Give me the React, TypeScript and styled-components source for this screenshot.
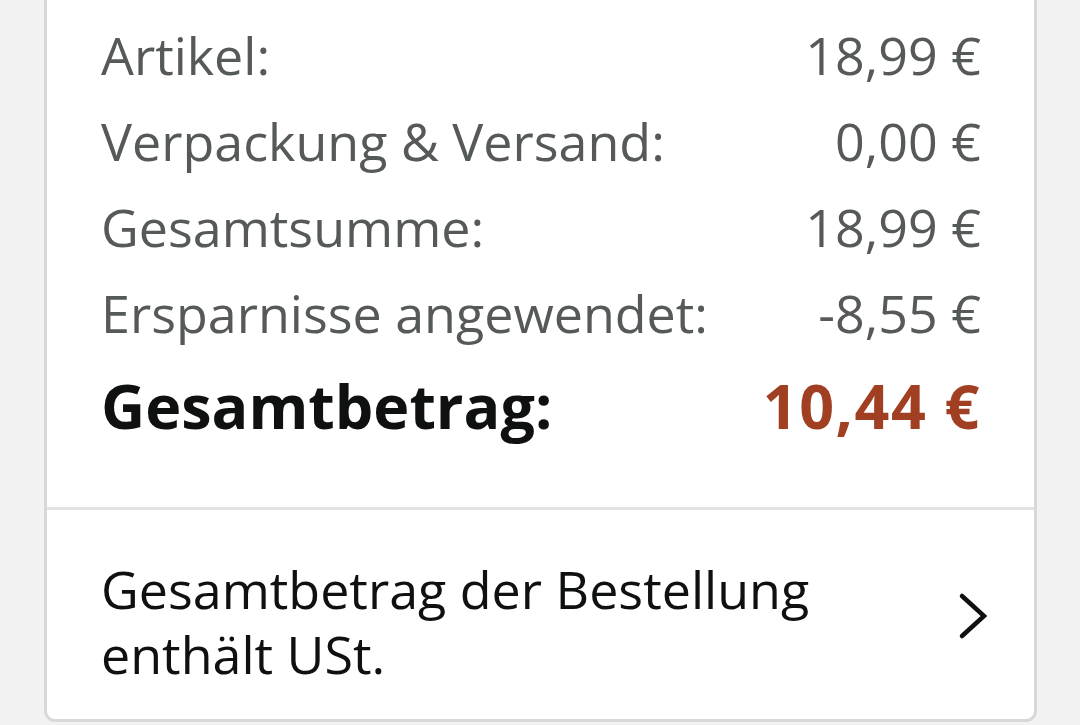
import React from "react";
import styled, { createGlobalStyle } from "styled-components";

const GlobalStyle = createGlobalStyle`
  html, body {
    margin: 0;
    padding: 0;
    background: #f2f2f2;
    font-family: "Open Sans", "Noto Sans", Arial, sans-serif;
    overflow: hidden;
  }
  * { box-sizing: border-box; }
`;

const Page = styled.div`
  width: 1080px;
  height: 725px;
  padding-left: 44px;
  background: #f2f2f2;
`;

const Card = styled.div`
  width: 993px;
  background: #ffffff;
  border: 3px solid #d8d8d8;
  border-top: none;
  border-radius: 0 0 11px 11px;
`;

const Summary = styled.div`
  display: flex;
  flex-direction: column;
  padding: 12px 53px 58px 54px;
`;

const Row = styled.div<{ $total?: boolean }>`
  display: flex;
  justify-content: space-between;
  align-items: baseline;
  font-size: ${(p) => (p.$total ? "61px" : "52px")};
  line-height: 86px;
  font-weight: ${(p) => (p.$total ? 700 : 400)};
  color: ${(p) => (p.$total ? "#0f1111" : "#565959")};
  margin-top: ${(p) => (p.$total ? "7px" : "0")};
`;

const Amount = styled.span<{ $total?: boolean }>`
  color: ${(p) => (p.$total ? "#a13f22" : "inherit")};
  letter-spacing: ${(p) => (p.$total ? "1.5px" : "0")};
`;

const Divider = styled.div`
  height: 3px;
  background: #e3e3e3;
`;

const TaxLink = styled.div`
  display: flex;
  align-items: flex-start;
  justify-content: space-between;
  padding: 46px 46px 33px 54px;
  gap: 40px;
`;

const TaxText = styled.div`
  flex: 1;
  font-size: 52px;
  line-height: 65px;
  color: #0f1111;
`;

const Chevron = styled.svg`
  flex: none;
  width: 30px;
  height: 48px;
  margin-top: 36px;
`;

const rows = [
  { label: "Artikel:", value: "18,99 €" },
  { label: "Verpackung & Versand:", value: "0,00 €" },
  { label: "Gesamtsumme:", value: "18,99 €" },
  { label: "Ersparnisse angewendet:", value: "-8,55 €" },
];

export default function App() {
  return (
    <>
      <GlobalStyle />
      <Page>
        <Card>
          <Summary>
            {rows.map((r) => (
              <Row key={r.label}>
                <span>{r.label}</span>
                <Amount>{r.value}</Amount>
              </Row>
            ))}
            <Row $total>
              <span>Gesamtbetrag:</span>
              <Amount $total>10,44 €</Amount>
            </Row>
          </Summary>
          <Divider />
          <TaxLink>
            <TaxText>Gesamtbetrag der Bestellung enthält USt.</TaxText>
            <Chevron viewBox="0 0 30 48">
              <polyline
                points="4,4 26,24 4,44"
                fill="none"
                stroke="#0f1111"
                strokeWidth="4.5"
                strokeLinecap="round"
                strokeLinejoin="miter"
              />
            </Chevron>
          </TaxLink>
        </Card>
      </Page>
    </>
  );
}
